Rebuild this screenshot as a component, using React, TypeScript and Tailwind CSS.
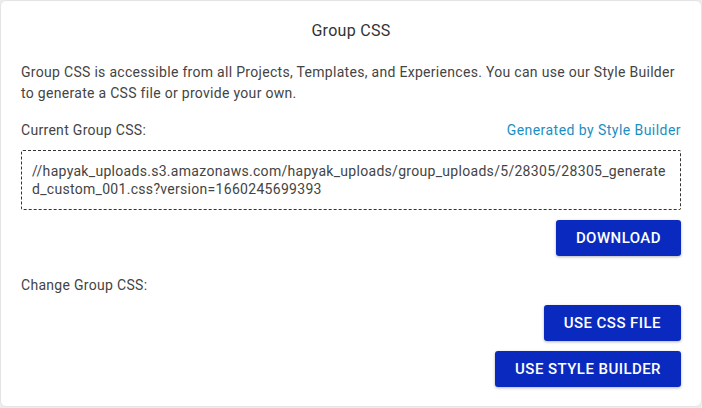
import React from "react";

const CSS_URL =
  "//hapyak_uploads.s3.amazonaws.com/hapyak_uploads/group_uploads/5/28305/28305_generated_custom_001.css?version=1660245699393";

function BlueButton({ children }: { children: React.ReactNode }) {
  return (
    <button
      type="button"
      className="h-9 rounded-[3px] bg-[#0a2abf] px-5 text-[15px] font-medium tracking-[0.03em] text-white shadow-[0_1px_3px_rgba(0,0,0,0.3)]"
    >
      {children}
    </button>
  );
}

export default function App() {
  return (
    <div className="h-[408px] w-[702px] bg-[#ececec] font-['Roboto',sans-serif]">
      <div className="flex h-[407px] w-[702px] flex-col rounded-md border border-[#e4e4e4] bg-white px-[20px] text-[14px] tracking-[0.3px] text-[#444]">
        <h2 className="mt-[20px] text-center text-[16px] leading-5 text-[#333]">Group CSS</h2>

        <p className="mt-[21px] leading-[21px]">
          Group CSS is accessible from all Projects, Templates, and Experiences. You can use our Style Builder
          to generate a CSS file or provide your own.
        </p>

        <div className="mt-[16px] flex items-center justify-between leading-5">
          <span>Current Group CSS:</span>
          <a href="#" className="tracking-[0.45px] text-[#1b8ec4]">
            Generated by Style Builder
          </a>
        </div>

        <div className="mt-[10px] rounded-[2px] border border-dashed border-[#333] px-[10px] py-[11px] leading-[18px] break-all">
          {CSS_URL}
        </div>

        <div className="mt-[10px] flex justify-end">
          <BlueButton>DOWNLOAD</BlueButton>
        </div>

        <div className="mt-[19px] leading-5">Change Group CSS:</div>

        <div className="mt-[10px] flex flex-col items-end gap-[10px]">
          <BlueButton>USE CSS FILE</BlueButton>
          <BlueButton>USE STYLE BUILDER</BlueButton>
        </div>
      </div>
    </div>
  );
}
